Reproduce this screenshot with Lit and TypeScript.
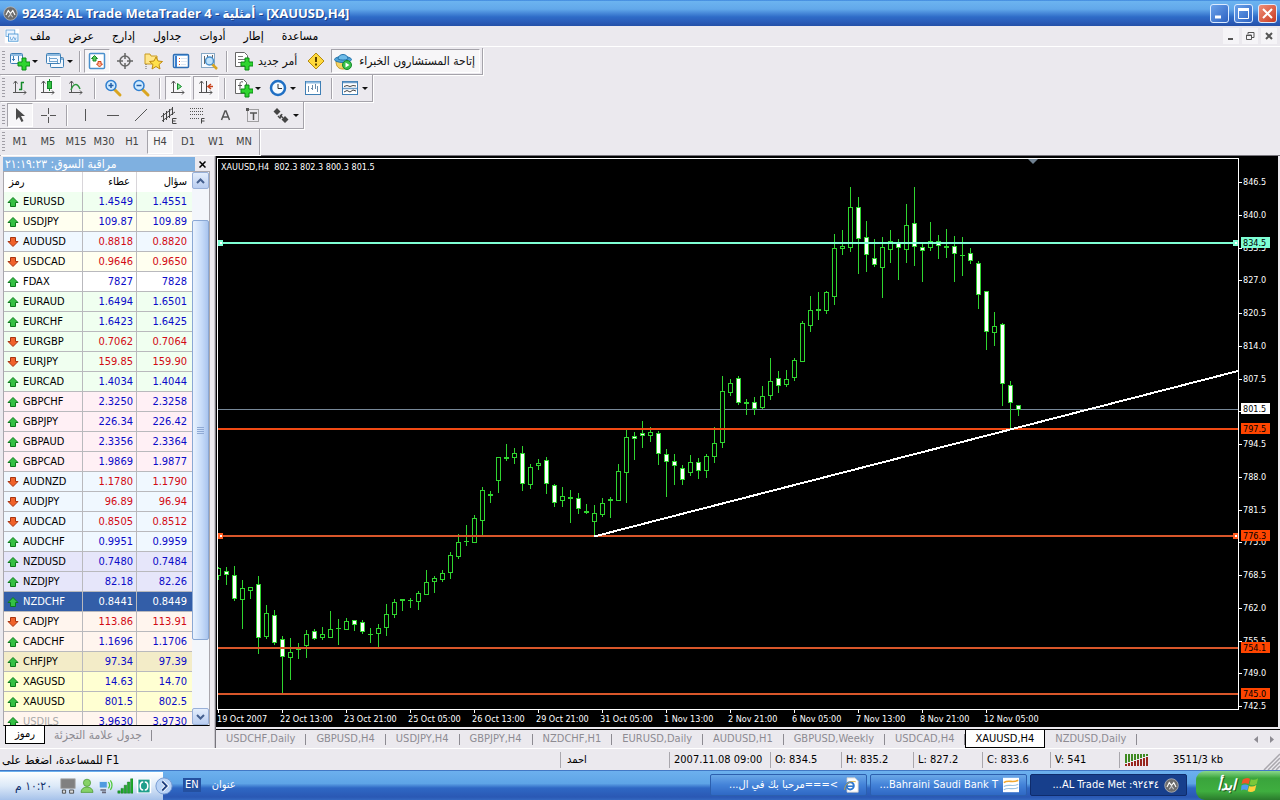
import { LitElement, html, svg, css, nothing } from "lit";
import { customElement, state } from "lit/decorators.js";
import { classMap } from "lit/directives/class-map.js";

/* ---------- data ---------- */

type Quote = [symbol: string, bid: string, ask: string, up: boolean, tint: string];

const QUOTES: Quote[] = [
  ["EURUSD", "1.4549", "1.4551", true, "mint"],
  ["USDJPY", "109.87", "109.89", true, "ivory"],
  ["AUDUSD", "0.8818", "0.8820", false, "ice"],
  ["USDCAD", "0.9646", "0.9650", false, "ivory"],
  ["FDAX", "7827", "7828", true, "plain"],
  ["EURAUD", "1.6494", "1.6501", true, "mint"],
  ["EURCHF", "1.6423", "1.6425", true, "mint"],
  ["EURGBP", "0.7062", "0.7064", false, "mint"],
  ["EURJPY", "159.85", "159.90", false, "mint"],
  ["EURCAD", "1.4034", "1.4044", true, "mint"],
  ["GBPCHF", "2.3250", "2.3258", true, "rose"],
  ["GBPJPY", "226.34", "226.42", true, "rose"],
  ["GBPAUD", "2.3356", "2.3364", true, "rose"],
  ["GBPCAD", "1.9869", "1.9877", true, "rose"],
  ["AUDNZD", "1.1780", "1.1790", false, "ice"],
  ["AUDJPY", "96.89", "96.94", false, "ice"],
  ["AUDCAD", "0.8505", "0.8512", false, "ice"],
  ["AUDCHF", "0.9951", "0.9959", true, "ice"],
  ["NZDUSD", "0.7480", "0.7484", true, "lavender"],
  ["NZDJPY", "82.18", "82.26", true, "lavender"],
  ["NZDCHF", "0.8441", "0.8449", true, "chosen"],
  ["CADJPY", "113.86", "113.91", false, "shell"],
  ["CADCHF", "1.1696", "1.1706", true, "shell"],
  ["CHFJPY", "97.34", "97.39", true, "khaki"],
  ["XAGUSD", "14.63", "14.70", true, "lemon"],
  ["XAUUSD", "801.5", "802.5", true, "lemon"],
  ["USDILS", "3.9630", "3.9730", true, "shell faded"],
];

/* high, body top, body bottom, low, falling */
const CANDLES: [number, number, number, number, number][] = [
  [567,568,576,580,0],[567,571,575,585,1],[566,575,599,601,1],[580,588,600,629,0],[587,587,591,599,0],
  [576,584,638,654,1],[605,613,637,639,0],[610,615,643,645,1],[636,639,657,694,1],[638,652,658,680,0],
  [643,649,649,659,0],[630,634,646,658,0],[629,631,639,640,1],[627,634,638,640,0],[611,629,638,638,0],
  [619,628,628,645,0],[618,621,630,630,0],[620,620,625,631,1],[620,622,632,634,1],[628,634,634,643,0],
  [624,628,634,648,0],[604,614,628,636,0],[599,602,615,618,0],[599,599,601,611,1],[598,600,600,608,0],
  [591,593,602,610,0],[570,582,595,595,0],[576,578,582,593,0],[570,573,580,582,0],[552,555,573,579,0],
  [534,542,557,559,0],[525,541,541,546,0],[515,518,543,543,0],[487,490,521,535,0],[491,494,495,503,1],
  [457,457,481,493,0],[444,457,458,461,1],[448,453,458,464,0],[446,453,484,491,1],[464,467,485,489,0],
  [459,463,466,470,0],[457,460,484,494,1],[484,485,503,507,1],[487,496,501,507,0],[490,497,498,523,1],
  [493,498,509,514,1],[504,511,513,514,1],[505,513,522,536,0],[498,503,515,517,0],[497,499,500,518,1],
  [464,471,501,501,0],[429,437,473,503,0],[432,436,439,460,1],[421,433,436,448,1],[427,432,436,442,0],
  [431,433,454,465,1],[449,454,462,497,1],[454,461,466,485,1],[465,468,480,485,1],[455,462,473,476,0],
  [458,462,471,479,1],[454,456,471,478,0],[427,443,457,463,0],[376,391,443,448,0],[379,383,393,396,0],
  [376,378,403,405,1],[399,402,403,415,1],[397,402,409,415,1],[386,396,408,409,0],[358,381,396,400,0],
  [371,378,386,393,1],[370,379,385,387,0],[358,360,378,381,0],[321,323,362,362,0],[296,310,326,332,0],
  [292,309,311,320,1],[291,292,311,314,0],[234,248,297,305,0],[230,246,249,255,0],[187,207,248,252,0],
  [197,207,239,274,1],[221,237,255,272,1],[239,258,265,267,1],[237,247,268,298,0],[230,241,250,263,0],
  [239,243,248,280,1],[204,225,250,263,0],[187,223,247,266,1],[244,247,251,282,1],[222,241,248,251,0],
  [235,241,246,259,1],[229,246,247,258,1],[236,246,254,282,1],[237,255,255,276,0],[248,253,261,264,1],
  [261,263,295,309,1],[291,291,332,350,1],[312,326,333,346,0],[323,324,384,406,1],[381,385,403,429,1],
  [405,405,410,416,1],
];

const PRICES: [string, number][] = [
  ["846.5",182],["840.0",215],["833.5",248],["827.0",280],["820.5",313],["814.0",346],["807.5",379],
  ["801.0",411],["794.5",444],["788.0",477],["781.5",510],["775.0",542],["768.5",575],["762.0",608],
  ["755.5",641],["749.0",673],["742.5",706],
];

/* price, y, line colour, tag colour, tag text colour, line weight */
const LEVELS: [string, number, string, string, string, number][] = [
  ["834.5",243,"#7fffd4","#7fffd4","#000",2],
  ["797.5",429,"#f04a14","#ff4500","#000",2],
  ["776.3",536,"#d8562a","#ff4500","#000",2],
  ["754.1",648,"#d8562a","#ff4500","#000",2],
  ["745.0",694,"#d8562a","#ff4500","#000",2],
  ["801.5",409,"#778899","#fff","#000",1],
];

const DATES = ["19 Oct 2007","22 Oct 13:00","23 Oct 21:00","25 Oct 05:00","26 Oct 13:00","29 Oct 21:00",
  "31 Oct 05:00","1 Nov 13:00","2 Nov 21:00","6 Nov 05:00","7 Nov 13:00","8 Nov 21:00","12 Nov 05:00"];

const CHART_TABS = ["USDCHF,Daily","GBPUSD,H4","USDJPY,H4","GBPJPY,H4","NZDCHF,H1","EURUSD,Daily",
  "AUDUSD,H1","GBPUSD,Weekly","USDCAD,H4","XAUUSD,H4","NZDUSD,Daily"];

const MENUS = ["ملف","عرض","إدارج","جداول","أدوات","إطار","مساعدة"];
const PERIODS = ["M1","M5","M15","M30","H1","H4","D1","W1","MN"];

/* ---------- icons (20 x 20 grid) ---------- */

const plus = svg`<path d="M12 7h4v4h4v4h-4v4h-4v-4H8v-4h4z" fill="#2fd52f" stroke="#0a8a14"/>`;
const pane = (x: number, y: number, w: number, h: number) =>
  svg`<rect x=${x + 0.5} y=${y + 0.5} width=${w} height=${h} rx="1" fill="#f4f9ff" stroke="#3f7fb5"/><path d="M${x + 1} ${y + 2}h${w - 1}" stroke="#8fbbe0" stroke-width="2"/>`;
const axes = svg`<path d="M5.500 3v12M3 14.500h13M3.500 5.500l2-2.500 2 2.500M14 12.500l2 2-2 2" fill="none" stroke="#555"/>`;
const lens = svg`<path d="M11 11l6 6" stroke="#d9a520" stroke-width="3" stroke-linecap="round"/><circle cx="8" cy="7.500" r="5" fill="#cfeaff" stroke="#2f7fd0" stroke-width="1.500"/>`;
const arrowUp = svg`<path d="M6 .5l5 5H8.500v4h-5v-4H1z" fill="#35c043" stroke="#0c7a1c"/>`;
const arrowDown = svg`<path d="M6 9.500l5-5H8.500v-4h-5v4H1z" fill="#f0622a" stroke="#a83510"/>`;

const ICONS: Record<string, unknown> = {
  newChart: svg`${pane(0, 2, 12, 10)}<path d="M3.500 5v5M2 8.500h3M8.500 5v5" stroke="#3f7fb5"/>${plus}`,
  profiles: svg`${pane(5, 6, 13, 10)}${pane(1, 2, 14, 10)}<path d="M4.500 6v4M4 7.500h8M4 10.500h8M12.500 8v4" stroke="#6fa3cf"/>`,
  market: svg`<rect x="2.500" y="2.500" width="15" height="15" rx="1" fill="#fff" stroke="#4a90cc" stroke-width="1.500"/><path d="M7.500 4.500l3 3H9v2.500H6V7.500H4.500z" fill="#58c858" stroke="#168a26"/><path d="M12.500 16l-3-3H11v-2.500h3V13h1.500z" fill="#ffb090" stroke="#d2451a"/>`,
  target: svg`<circle cx="10" cy="10" r="5" fill="none" stroke="#666" stroke-width="1.500"/><path d="M10 2v6M10 12v6M2 10h6M12 10h6" stroke="#666" stroke-width="1.500"/>`,
  favourites: svg`<path d="M2 3h5l1 2h6v8H2z" fill="#ffe68a" stroke="#c99a20"/><path d="M3 13v5" stroke="#666" stroke-dasharray="1 1"/><path d="M13 6l2 4 4.500.5-3.500 3 1 4.500-4-2.500L9 18l1-4.500-3.500-3L11 10z" fill="#ffe04a" stroke="#c08a10"/>`,
  terminal: svg`<rect x="2.500" y="3.500" width="15" height="13" rx="1" fill="#fff" stroke="#2f6fb5" stroke-width="1.500"/><path d="M3 4.500h14" stroke="#6fa8e0" stroke-width="1"/><path d="M4 5h2v11H4z" fill="#3a7fd0"/><path d="M8 7.500h1M8 10.500h1M8 13.500h1" stroke="#e05030"/><path d="M10 7.500h6M10 10.500h6M10 13.500h5" stroke="#dbe7f4"/>`,
  tester: svg`<rect x="2.500" y="2.500" width="13" height="14" fill="#f8fbff" stroke="#88a8c4"/><path d="M5.500 5v8M8.500 4v4M13.500 4v5" stroke="#666"/><path d="M13 13l5 5" stroke="#d9a520" stroke-width="2.500"/><circle cx="10.500" cy="10" r="4" fill="#bfe2fb" stroke="#4a90cc" stroke-width="1.500"/>`,
  order: svg`<path d="M2.500 1.500h9l3 3v11h-12z" fill="#fff" stroke="#666"/><path d="M5 5.500h5M5 8.500h7M5 11.500h4" stroke="#777"/>${plus}`,
  diamond: svg`<path d="M10 2l8 8-8 8-8-8z" fill="#ffd93c" stroke="#b48a10"/><path d="M10 6v5M10 12.500v2" stroke="#5a4200" stroke-width="2"/>`,
  expert: svg`<path d="M3 10c0 6 3 8 7 8s6-2 6-6z" fill="#f5d264" stroke="#c29a2a"/><ellipse cx="10" cy="8.500" rx="8.500" ry="3" fill="#4fa3d8" stroke="#2474ac"/><path d="M5 8c0-6 10-6 10 0-3 1.500-7 1.500-10 0z" fill="#6dbbe8" stroke="#2474ac"/><circle cx="14" cy="14" r="4.500" fill="#3ac04a" stroke="#148a28"/><path d="M12.500 11.500l4 2.500-4 2.500z" fill="#fff"/>`,
  bars: svg`${axes}<path d="M11.500 4v8M9 11.500h3M11 4.500h3" stroke="#138a28" stroke-width="1.500"/>`,
  candles: svg`${axes}<path d="M11.500 1v12" stroke="#138a28"/><rect x="9.500" y="3.500" width="4" height="7" fill="#35c043" stroke="#138a28"/>`,
  line: svg`${axes}<path d="M5 12c2-6 6-8 9-1" fill="none" stroke="#2c9a3c" stroke-width="1.500"/>`,
  zoomIn: svg`${lens}<path d="M5.500 7.500h5M8 5v5" stroke="#2460a8" stroke-width="1.500"/>`,
  zoomOut: svg`${lens}<path d="M5.500 7.500h5" stroke="#2460a8" stroke-width="1.500"/>`,
  scroll: svg`${axes}<path d="M9.500 5.500l4 3-4 3z" fill="#7fe08a" stroke="#138a28"/>`,
  shift: svg`${axes}<path d="M10.500 3v11" stroke="#444"/><path d="M17 8.500h-4M15 6l-3 2.500 3 2.500" fill="none" stroke="#c8401a" stroke-width="1.500"/>`,
  indicator: svg`<path d="M2.500 1.500h8l3 3v11h-11z" fill="#fff" stroke="#666"/><path d="M10 4c-3-1-3 1-3 3v5M5 7.500h4" fill="none" stroke="#555"/>${plus}`,
  clock: svg`<circle cx="10" cy="10" r="7" fill="#f4faff" stroke="#1f6fc4" stroke-width="2.500"/><path d="M10 6v4.500h4" fill="none" stroke="#333"/>`,
  template: svg`<rect x="2.500" y="3.500" width="15" height="13" fill="#fff" stroke="#3f7fb5"/><path d="M3 4.500h14" stroke="#8fbbe0" stroke-width="2"/><path d="M5.500 8v6M9.500 7v5M8 10.500h2M12.500 6v5M14.500 8v6" stroke="#6a8cab"/>`,
  waves: svg`<rect x="2.500" y="3.500" width="15" height="13" fill="#fff" stroke="#3f7fb5"/><path d="M3 4.500h14M3 10.500h14" stroke="#6f9fca" stroke-width="1.500"/><path d="M4 8.500l3-1 3 1 3-1 3 .5M4 14l3-1.500 3 1.500 3-2 3 1" fill="none" stroke="#444"/>`,
  pointer: svg`<path d="M6 3v12l3-3 2.500 5 2-1-2.500-5h4z" fill="#4a4a4a"/>`,
  cross: svg`<path d="M10.500 3v6M10.500 12v6M3 10.500h6M12 10.500h6" stroke="#555"/>`,
  vline: svg`<path d="M10.500 4v12" stroke="#555"/>`,
  hline: svg`<path d="M4 10.500h12" stroke="#555"/>`,
  trend: svg`<path d="M4 16L16 4" stroke="#555"/>`,
  channel: svg`<path d="M2 12L14 3M3 16L16 7M4.500 8v9M7.500 6v9M10.500 4v9M13.500 2v8" stroke="#444"/><path d="M17.500 13.500h-4v5h4M13.500 16h3" fill="none" stroke="#444"/>`,
  fibo: svg`<path d="M3 3.500h14M3 6.500h14M3 9.500h14M3 13.500h10" stroke="#555" stroke-dasharray="1 1"/><path d="M17.500 13.500h-3v5M14.500 16h3" fill="none" stroke="#444"/>`,
  textA: svg`<path d="M6.500 15L10 6h1l3.500 9M8 12h5" fill="none" stroke="#555" stroke-width="1.500"/>`,
  label: svg`<rect x="4.500" y="4.500" width="11" height="12" fill="none" stroke="#555" stroke-dasharray="1 1"/><path d="M3 3h3v3H3z" fill="#555"/><path d="M7 8h7M10.500 8v7" stroke="#555" stroke-width="1.500"/>`,
  shapes: svg`<path d="M6 3l3.500 3.500L6 10 2.500 6.500zM14 11l3.500 3.500L14 18l-3.500-3.500z" fill="#444"/><path d="M9 10l3 3M7 11l2 2 2-4" fill="none" stroke="#444" stroke-width="1.500"/>`,
  app: svg`<circle cx="10" cy="10" r="9" fill="#6d6d6d" stroke="#bdbdbd"/><path d="M4 12l3-6 3 4 3-4 3 6" fill="none" stroke="#fff" stroke-width="1.500"/><path d="M7 15l3-4 3 4" fill="none" stroke="#ccc" stroke-width="1.500"/>`,
  mdi: svg`<rect x="1" y="1" width="18" height="18" fill="#fff"/><rect x="2.500" y="2.500" width="11" height="8" fill="#eaf4ff" stroke="#5f9fd8"/><rect x="5.500" y="7.500" width="12" height="9" fill="#eaf4ff" stroke="#3f8fd0"/><path d="M8 11v3l2 1 2-4 2 4 1-3" fill="none" stroke="#5f9fd8"/>`,
  disk: svg`<path d="M1 1h18v12H1z" fill="#808080" stroke="#aaa"/><path d="M3 15h4v4H3zM12 15h5v4h-5z" fill="#ddd" stroke="#333"/>`,
  person: svg`<circle cx="10" cy="6" r="4.500" fill="#86d268" stroke="#4f9a3a"/><path d="M2.500 18c0-9 15-9 15 0z" fill="#86d268" stroke="#4f9a3a"/>`,
  network: svg`<rect x="1.500" y="4.500" width="10" height="8" fill="#4f9be0" stroke="#e8f2fa"/><path d="M3 15h7M5 18h5" stroke="#667" stroke-width="2"/><path d="M13 5q3 4 0 8M15.500 3q4 6 0 12" fill="none" stroke="#4fc83a" stroke-width="1.500"/>`,
  signal: svg`<path d="M1 16h3v3H1zM5 13h3v6H5zM9 9h3v10H9zM13 5h3v14h-3zM17 1h3v18h-3z" fill="#1fae2c" stroke="#0b5a14" stroke-width=".5"/>`,
  sync: svg`<rect x="1" y="1" width="18" height="18" fill="#fff"/><path d="M3 2h14v16H3z" fill="#1f9f8c"/><path d="M9 5c-5 0-5 10 0 10M11 5c5 0 5 10 0 10" fill="none" stroke="#fff" stroke-width="2"/>`,
  chevron: svg`<circle cx="10" cy="10" r="9" fill="#b9d3f6" stroke="#6f95cf"/><path d="M8 5l5 5-5 5" fill="none" stroke="#fff" stroke-width="4"/><path d="M8 5l5 5-5 5" fill="none" stroke="#1e3f80" stroke-width="2"/>`,
  explorer: svg`<path d="M5 1h10l4 4v14H5z" fill="#fff" stroke="#c8c8c8"/><circle cx="9" cy="11" r="4.500" fill="none" stroke="#2f78d0" stroke-width="2.500"/><path d="M5 11.500h8" stroke="#2f78d0" stroke-width="2"/><path d="M2 16C2 8 10 4 16 6" fill="none" stroke="#d8a82c"/>`,
  bank: svg`<path d="M0 1h20v18H0z" fill="#fff"/><path d="M1 7c6-4 11 1 18-3" fill="none" stroke="#f0a830" stroke-width="2"/><path d="M1 12c6-4 11 1 18-3M1 16c6-4 11 1 18-3" fill="none" stroke="#9cc4e4" stroke-width="1.500"/>`,
  flag: svg`<path d="M2 4q4-3 8-1l-1.500 6q-4-2-8 0z" fill="#f0562a"/><path d="M11 3.500q4 2 8-1l-1.500 6q-4 3-8 1z" fill="#7ac83a"/><path d="M.5 10.500q4-2 8 0L7 16q-4-2-7 0z" fill="#4f9bf0"/><path d="M9 11q4 2 8-1l-1.500 6q-4 3-8 1z" fill="#ffd03a"/>`,
};

const icon = (name: string, size = 20) =>
  html`<svg width=${size} height=${size} viewBox="0 0 20 20" aria-hidden="true">${ICONS[name]}</svg>`;

const base = css`
  :host { display: block; box-sizing: border-box; }
  *, *::before, *::after { box-sizing: border-box; }
  svg { display: block; flex: none; }
  button { font: inherit; color: inherit; margin: 0; padding: 0; border: 0; background: none; white-space: nowrap; }
`;

/* ---------- toolbars ---------- */

type Tool = { i?: string; t?: string; title: string; drop?: boolean; on?: boolean; wide?: boolean } | "|";

const ROWS: Tool[][] = [
  [
    { i: "newChart", title: "New chart", drop: true }, { i: "profiles", title: "Profiles", drop: true }, "|",
    { i: "market", title: "Market Watch", on: true }, { i: "target", title: "Data window" },
    { i: "favourites", title: "Navigator" }, { i: "terminal", title: "Terminal" }, { i: "tester", title: "Tester" }, "|",
    { i: "order", t: "أمر جديد", title: "New order" }, { i: "diamond", title: "MetaEditor" },
    { i: "expert", t: "إتاحة المستشارون الخبراء", title: "Expert Advisors", on: true, wide: true },
  ],
  [
    { i: "bars", title: "Bar chart" }, { i: "candles", title: "Candlesticks", on: true }, { i: "line", title: "Line chart" }, "|",
    { i: "zoomIn", title: "Zoom in" }, { i: "zoomOut", title: "Zoom out" }, "|",
    { i: "scroll", title: "Auto scroll", on: true }, { i: "shift", title: "Chart shift", on: true }, "|",
    { i: "indicator", title: "Indicators", drop: true }, { i: "clock", title: "Periods", drop: true },
    { i: "template", title: "Templates" }, "|", { i: "waves", title: "Layouts", drop: true },
  ],
  [
    { i: "pointer", title: "Cursor", on: true }, { i: "cross", title: "Crosshair" }, "|",
    { i: "vline", title: "Vertical line" }, { i: "hline", title: "Horizontal line" }, { i: "trend", title: "Trendline" },
    { i: "channel", title: "Channel" }, { i: "fibo", title: "Fibonacci" }, { i: "textA", title: "Text" },
    { i: "label", title: "Label" }, { i: "shapes", title: "Arrows", drop: true },
  ],
  PERIODS.map((p) => ({ t: p, title: p, on: p === "H4" })),
];

@customElement("tool-bars")
class ToolBars extends LitElement {
  static styles = [base, css`
    :host { border-top: 1px solid #fff; padding-top: 1px; }
    .bar { display: flex; align-items: stretch; width: max-content; height: 27px; padding: 1px 1px 1px 6px; position: relative;
      border-right: 1px solid #a5a3aa; border-bottom: 1px solid #a5a3aa; box-shadow: 1px 1px #fff; }
    .bar:last-child { border-bottom: 0; height: 26px; }
    .bar::before { content: ""; position: absolute; left: 2px; top: 3px; bottom: 3px; width: 3px;
      background: repeating-linear-gradient(#a09ea6 0 1px, #ebe9ee 1px 3px); }
    .tool { display: flex; align-items: center; justify-content: center; width: 26px; margin: 0 1px; border: 1px solid transparent; color: #444; }
    .drop { width: 33px; gap: 2px; }
    .worded { width: auto; padding: 0 3px 0 1px; gap: 5px; color: #111; font-size: 12px; }
    .wide { padding: 0 4px 0 1px; gap: 6px; }
    .on { background: #f7f6f8; border-color: #a5a3aa #fff #fff #a5a3aa; }
    .caret { width: 0; height: 0; border: 3px solid transparent; border-top-color: #111; border-bottom: 0; }
    .sep { width: 1px; margin: 2px 4px 1px; background: #a5a3aa; box-shadow: 1px 0 #fff; }
    .bar:first-child .sep { margin: 2px 3px 1px; }
  `];

  render() {
    return ROWS.map((row) => html`<div class="bar" role="toolbar">${row.map((t) => t === "|"
      ? html`<span class="sep"></span>`
      : html`<button title=${t.title} class=${classMap({ tool: true, drop: !!t.drop, on: !!t.on, worded: !!(t.i && t.t), wide: !!t.wide })}>
          ${t.i ? icon(t.i) : nothing}${t.t ? html`<span>${t.t}</span>` : nothing}${t.drop ? html`<span class="caret"></span>` : nothing}
        </button>`)}</div>`);
  }
}

/* ---------- market watch ---------- */

@customElement("market-watch")
class MarketWatch extends LitElement {
  static styles = [base, css`
    :host { display: flex; flex-direction: column; min-height: 0; padding: 1px 4px 3px 3px; border-top: 1px solid #a9a7ad; border-right: 1px solid #c9c7cd; }
    .head { display: flex; align-items: center; height: 14px; flex: none; }
    .caption { flex: 1; margin: 0; padding-left: 2px; font-size: 12px; line-height: 14px; font-weight: 400; color: #fff; background: #7fb0e0; }
    .close { width: 15px; display: grid; place-items: center; }
    .view { display: flex; flex: 1; min-height: 0; border: 1px solid #a9a7ad; border-bottom: 1px solid #000; background: #fff; }
    .list { flex: 1; overflow: hidden; }
    table { width: 100%; border-collapse: separate; border-spacing: 0; table-layout: fixed; }
    th, td { height: 20px; padding: 0 3px 0 0; text-align: right; font-weight: 400; line-height: 18px; }
    th { padding-right: 6px; border-right: 1px solid #d8d6da; }
    th:first-child { text-align: left; padding-left: 5px; width: 79px; }
    th:nth-child(2) { width: 54px; }
    td { color: #0a0ac8; border-right: 1px solid #b9b9bd; border-bottom: 1px solid #b9b9bd; }
    td:last-child, th:last-child { border-right: 0; padding-right: 5px; }
    .name { display: flex; align-items: center; gap: 4px; padding-left: 3px; color: #000; }
    .fall td { color: #d20a14; }
    .fall .name { color: #000; }
    .mint { background: #f0fff0; } .ivory { background: #fffff0; } .ice { background: #f0f8ff; }
    .rose { background: #fff0f5; } .lavender { background: #e6e6fa; } .shell { background: #fff5ee; }
    .khaki { background: #f3ecc8; } .lemon { background: #ffffd2; }
    .chosen { background: #335ea8; }
    .chosen td, .chosen .name { color: #fff; }
    .faded .name { color: #aaa; }
    .scroll { width: 17px; display: flex; flex-direction: column; background: #f3f6fb; }
    .step { height: 17px; border: 1px solid #98b0d8; border-radius: 2px; background: linear-gradient(#e4eefc, #b9cdf0); display: grid; place-items: center; }
    .track { flex: 1; display: flex; flex-direction: column; }
    .thumb { margin-top: 31px; flex: 0 0 81%; border: 1px solid #8aa8d4; border-radius: 2px; display: grid; place-items: center;
      background: linear-gradient(90deg, #eaf3fe, #c6dbf8 60%, #a9c4ee); }
    .tabs { display: flex; flex: none; height: 19px; padding-left: 2px; color: #8d8b92; }
    .tab { padding: 0 9px 1px; height: 18px; font-size: 12px; }
    .tab.current { color: #000; background: #fff; border: 1px solid #000; border-top: 0; font-size: 11px; }
    .tick { width: 1px; height: 11px; margin-top: 4px; background: #8d8b92; }
  `];

  render() {
    return html`
      <div class="head">
        <h2 class="caption"><bdi dir="rtl">مراقبة السوق: ٢١:١٩:٢٣</bdi></h2>
        <button class="close" aria-label="Close"><svg width="7" height="7" viewBox="0 0 7 7"><path d="M.5.5l6 6M6.500.5l-6 6" stroke="#000" stroke-width="1.500"/></svg></button>
      </div>
      <div class="view">
        <div class="list">
          <table>
            <thead><tr><th scope="col">رمز</th><th scope="col">عطاء</th><th scope="col">سؤال</th></tr></thead>
            <tbody>${QUOTES.map(([s, b, a, up, tint]) => html`
              <tr class="${tint} ${up ? "rise" : "fall"}">
                <td><span class="name"><svg width="12" height="10" viewBox="0 0 12 10">${up ? arrowUp : arrowDown}</svg>${s}</span></td>
                <td>${b}</td><td>${a}</td>
              </tr>`)}</tbody>
          </table>
        </div>
        <div class="scroll">
          <button class="step" aria-label="Up"><svg width="9" height="6" viewBox="0 0 9 6"><path d="M1 5l3.500-3.500L8 5" fill="none" stroke="#45608f" stroke-width="2"/></svg></button>
          <div class="track"><div class="thumb"><svg width="7" height="7" viewBox="0 0 7 7"><path d="M0 .5h7M0 2.500h7M0 4.500h7M0 6.500h7" stroke="#8fa9d4"/></svg></div></div>
          <button class="step" aria-label="Down"><svg width="9" height="6" viewBox="0 0 9 6"><path d="M1 1l3.500 3.500L8 1" fill="none" stroke="#45608f" stroke-width="2"/></svg></button>
        </div>
      </div>
      <div class="tabs"><button class="tab current">رموز</button><button class="tab">جدول علامة التجزئة</button><span class="tick"></span></div>`;
  }
}

/* ---------- price chart ---------- */

@customElement("price-chart")
class PriceChart extends LitElement {
  static styles = [base, css`
    :host { display: block; min-height: 0; background: #000; }
    svg { width: 100%; height: 100%; }
    text { font-size: 9px; fill: #fff; white-space: pre; }
    .frame { fill: none; stroke: #fff; }
    .wick, .body { stroke: #2fd52f; shape-rendering: crispEdges; }
    .body { fill: #000; }
    .falling { fill: #fff; }
    .crisp { shape-rendering: crispEdges; }
  `];

  render() {
    return html`<svg viewBox="216 156 1062 571" preserveAspectRatio="xMinYMin meet" role="img" aria-label="XAUUSD H4">
      <clipPath id="plot"><rect x="218" y="159" width="1020" height="550"/></clipPath>
      <path class="frame crisp" d="M217.500 158.500H1238.500V709.500H217.500z"/>
      <path d="M1028 159h10l-5 5z" fill="#6f8090"/>
      <text x="221" y="170">XAUUSD,H4  802.3 802.3 800.3 801.5</text>
      <path class="crisp" d="M218 409.500H1238" stroke="#778899"/>
      <g clip-path="url(#plot)">${CANDLES.map(([h, t, b, l, f], i) => {
        const x = 218 + i * 8;
        return svg`<path class="wick" d="M${x + 0.5} ${h}V${l}"/>${t === b
          ? svg`<path class="wick" d="M${x - 2} ${t + 0.5}h5"/>`
          : svg`<rect class=${f ? "body falling" : "body"} x=${x - 1.5} y=${t + 0.5} width="4" height=${b - t - 1 || 1}/>`}`;
      })}</g>
      ${LEVELS.slice(0, 5).map(([, y, c, , , w]) => svg`<path class="crisp" d="M218 ${y}H1238" stroke=${c} stroke-width=${w}/>`)}
      <path class="crisp" d="M594 536.500L1238 371" stroke="#fff" stroke-width="2"/>
      ${[[218, 243, "#7fffd4"], [1233, 243, "#7fffd4"], [218, 536, "#ff5a1e"], [1233, 536, "#ff5a1e"]].map(([x, y, c]) =>
        svg`<rect x=${x} y=${(y as number) - 3} width="5" height="6" fill=${c}/><rect x=${(x as number) + 2} y=${(y as number) - 1} width="2" height="2" fill="#fff"/>`)}
      ${PRICES.map(([p, y]) => svg`<path class="crisp" d="M1239 ${y + 0.5}h3" stroke="#fff"/><text x="1243" y=${y + 3}>${p}</text>`)}
      ${LEVELS.map(([p, y, , bg, fg]) => svg`<rect x="1241" y=${y - 6} width="29" height="11" fill=${bg}/><text x="1243" y=${y + 3} style="fill:${fg}">${p}</text>`)}
      ${DATES.map((d, i) => svg`<path class="crisp" d="M${218.5 + i * 64} 710v3" stroke="#fff"/><text x=${i ? 216 + i * 64 : 217} y="722">${d}</text>`)}
    </svg>`;
  }
}

/* ---------- window ---------- */

@customElement("app-root")
class AppRoot extends LitElement {
  @state() private tab = "XAUUSD,H4";

  static styles = [base, css`
    :host { display: flex; flex-direction: column; height: 100vh; background: #ebe9ee; color: #000;
      font: 11px/14px "DejaVu Sans Condensed", "DejaVu Sans", "Noto Sans", sans-serif; overflow: hidden; }
    .title { display: flex; align-items: center; gap: 4px; height: 26px; flex: none; padding: 0 3px; color: #fff;
      background: linear-gradient(#2a72d4 0, #6cb4f0 4%, #62a8ea 35%, #2f6cc8 65%, #2a5cb8 85%, #2450a8); }
    .title h1 { flex: 1; margin: 0; font: 700 13px/18px "Noto Sans", "DejaVu Sans Condensed", sans-serif; text-shadow: 1px 1px #1c3f86; }
    .win { display: grid; place-items: center; width: 19px; height: 19px; border: 1px solid #dcebff; border-radius: 3px; background: linear-gradient(135deg, #6aa2ea, #2d62c2); }
    .win + .win { margin-left: 1px; }
    .kill { background: linear-gradient(135deg, #f0907a, #c83a20); }
    .menu { display: flex; align-items: center; height: 20px; flex: none; padding-left: 4px; font-size: 12px; }
    .menu .item { padding: 0 9px; }
    .menu .item:first-of-type { margin-left: 1px; }
    .fill { flex: 1; }
    .small { display: grid; place-items: center; width: 16px; height: 16px; margin-right: 3px; background: #f5f4f7; }
    tool-bars { flex: none; }
    .main { flex: 1; display: grid; grid-template: minmax(0, 1fr) / 215px minmax(0, 1fr); min-height: 0; }
    .desk { display: flex; flex-direction: column; min-width: 0; border-top: 1px solid #77757c; border-left: 1px solid #77757c; padding-right: 2px; }
    price-chart { flex: 1; }
    .charts { display: flex; flex: none; height: 19px; margin: 2px -2px 0 0; border-top: 1px solid #000; color: #8d8b92; overflow: hidden; }
    .chart { position: relative; padding: 0 11px 0 10px; height: 18px; }
    .chart::after { content: ""; position: absolute; right: 0; top: 4px; width: 1px; height: 11px; background: #8d8b92; }
    .chart.current { color: #000; background: #fff; border: 1px solid #000; border-top: 0; padding: 0 10px 0 9px; }
    .chart.current::after { display: none; }
    .nav { display: grid; place-items: center; width: 16px; }
    .status { display: flex; align-items: center; height: 22px; flex: none; border-top: 1px solid #fff; }
    .cell { height: 16px; line-height: 16px; padding-left: 4px; border-left: 1px solid #a9a7ad; white-space: nowrap; }
    .help { flex: 1; border: 0; padding-left: 2px; font-size: 12px; }
    .user { width: 109px; padding-left: 6px; } .when { width: 101px; } .open { width: 71px; } .high { width: 72px; }
    .low { width: 69px; } .shut { width: 68px; } .vol { width: 69px; }
    .net { display: flex; gap: 24px; align-items: center; width: 144px; padding-left: 5px; }
    .size { align-self: flex-end; }
    .task { display: flex; align-items: center; height: 30px; flex: none; color: #fff;
      background: linear-gradient(#2450a8 0, #6cb0ee 4%, #5ea4e6 45%, #2f68c4 60%, #2a58b4 90%, #3468c0); }
    .tray { display: flex; align-items: center; gap: 3px; width: 163px; height: 28px; margin-top: 2px; color: #10306c;
      background: linear-gradient(#fff, #dce9f8 50%, #a6c2ea); }
    .clock { width: 61px; padding-left: 15px; direction: rtl; text-align: left; font-size: 12px; }
    .more { margin-right: -10px; }
    .lang { margin: 0 11px 0 20px; padding: 0 2px; background: #2450a0; }
    .runs { display: flex; gap: 3px; }
    .run { display: flex; direction: rtl; align-items: center; gap: 5px; width: 157px; height: 22px; padding: 0 7px; border: 1px solid #2c5fae;
      border-radius: 2px; background: linear-gradient(#6aa8e8, #4382d8 50%, #2f68c4); }
    .run.current { background: #173f8c; border-color: #0f2c6c; }
    .start { display: flex; direction: rtl; align-items: center; justify-content: center; gap: 5px; width: 84px; height: 29px; margin-left: 9px; border-radius: 9px 0 0 9px;
      font: italic 700 15px/20px "DejaVu Sans Condensed", sans-serif; text-shadow: 1px 1px #1c5a1c; background: linear-gradient(#8ad88a, #3aa43c 25%, #3fae3f 70%, #2a7a2c); }
  `];

  private bars() {
    return html`<svg width="24" height="14" viewBox="0 0 24 14">${Array.from({ length: 8 }, (_, i) => svg`
      <path d="M${i * 3 + 1} 1v${9 - i}" stroke="#3f8a22" stroke-width="2"/><path d="M${i * 3 + 1} ${11 - i}V13" stroke="#98261c" stroke-width="2"/>`)}</svg>`;
  }

  render() {
    return html`
      <header class="title">
        ${icon("app", 15)}<h1>92434: AL Trade MetaTrader 4 - أمثلية - [XAUUSD,H4]</h1>
        <button class="win" aria-label="Minimize"><svg width="13" height="13"><path d="M2 10h6" stroke="#fff" stroke-width="3"/></svg></button>
        <button class="win" aria-label="Maximize"><svg width="13" height="13"><path d="M1.500 2v9.500h10V2z" fill="none" stroke="#fff"/><path d="M1 2.500h11" stroke="#fff" stroke-width="3"/></svg></button>
        <button class="win kill" aria-label="Close"><svg width="13" height="13"><path d="M2 2l9 9M11 2l-9 9" stroke="#fff" stroke-width="2"/></svg></button>
      </header>
      <nav class="menu">
        ${icon("mdi", 16)}
        ${MENUS.map((m) => html`<button class="item">${m}</button>`)}
        <span class="fill"></span>
        <button class="small" aria-label="Minimize chart"><svg width="10" height="10"><path d="M2 8h5" stroke="#555" stroke-width="2"/></svg></button>
        <button class="small" aria-label="Restore chart"><svg width="10" height="10"><path d="M3 3V1.500h6v5H7M1.500 4v4.500h5V4zM1 4.500h6" fill="none" stroke="#555"/></svg></button>
        <button class="small" aria-label="Close chart"><svg width="10" height="10"><path d="M2 2l6 6M8 2L2 8" stroke="#555" stroke-width="2"/></svg></button>
      </nav>
      <tool-bars></tool-bars>
      <main class="main">
        <market-watch></market-watch>
        <section class="desk">
          <price-chart></price-chart>
          <div class="charts">
            ${CHART_TABS.map((t) => html`<button class=${classMap({ chart: true, current: t === this.tab })} @click=${() => (this.tab = t)}>${t}</button>`)}
            <span class="fill"></span>
            <button class="nav" aria-label="Previous"><svg width="4" height="7"><path d="M4 0v7L0 3.500z" fill="#8d8b92"/></svg></button>
            <button class="nav" aria-label="Next"><svg width="4" height="7"><path d="M0 0v7l4-3.500z" fill="#8d8b92"/></svg></button>
          </div>
        </section>
      </main>
      <div class="status">
        <span class="cell help">للمساعدة، اضغط على F1</span>
        <span class="cell user">احمد</span><span class="cell when">2007.11.08 09:00</span>
        <span class="cell open">O: 834.5</span><span class="cell high">H: 835.2</span><span class="cell low">L: 827.2</span>
        <span class="cell shut">C: 833.6</span><span class="cell vol">V: 541</span>
        <span class="cell net">${this.bars()}3511/3 kb</span>
        <svg class="size" width="17" height="17"><path d="M1 17L17 1M5 17L17 5M9 17L17 9M13 17l4-4" stroke="#a9a7ad" stroke-width="1.500"/></svg>
      </div>
      <footer class="task">
        <div class="tray">
          <span class="clock">١٠:٢٠ م</span>
          ${["disk", "person", "network", "signal", "sync"].map((n) => icon(n, 16))}
          <span class="more">${icon("chevron", 18)}</span>
        </div>
        <span class="lang">EN</span><span>عنوان</span><span class="fill"></span>
        <div class="runs">
          <button class="run">${icon("explorer", 16)}<span>&gt;===مرحبا بك في ال...</span></button>
          <button class="run">${icon("bank", 16)}<span>Bahraini Saudi Bank T...</span></button>
          <button class="run current">${icon("app", 15)}<span>٩٢٤٣٤: AL Trade Met...</span></button>
        </div>
        <button class="start">${icon("flag", 18)}<span>ابدأ</span></button>
      </footer>`;
  }
}
